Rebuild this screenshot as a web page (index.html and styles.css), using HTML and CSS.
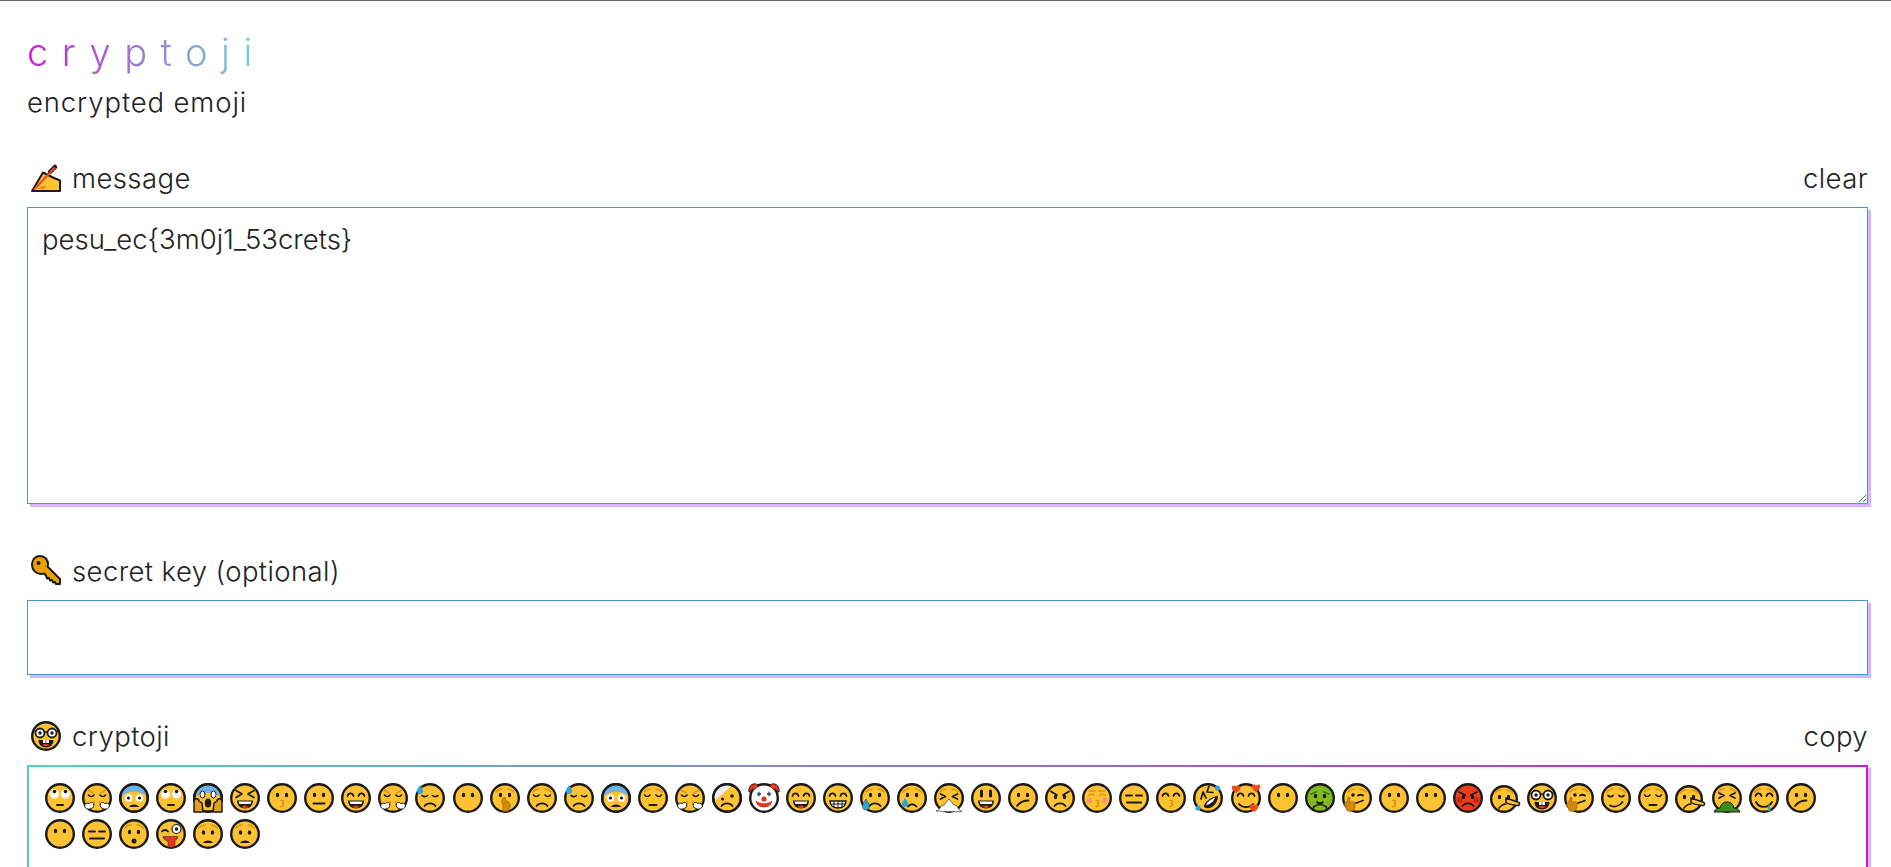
FILE: index.html
```html
<!DOCTYPE html>
<html lang="en">
<head>
  <meta charset="UTF-8">
  <meta name="viewport" content="width=device-width, initial-scale=1">
  <title>cryptoji</title>
  <link rel="stylesheet" href="styles.css">
</head>
<body>

  <!-- emoji drawings, reused below -->
  <svg class="defs" aria-hidden="true">
    <defs>
      <circle id="f" cx="16" cy="16" r="13.8" fill="#ffc233" stroke="#1a1a1a" stroke-width="2.4"/>
      <g id="dots" fill="#1a1a1a"><ellipse cx="11.5" cy="13" rx="1.7" ry="2.3"/><ellipse cx="20.5" cy="13" rx="1.7" ry="2.3"/></g>
      <g id="closed" fill="none" stroke="#1a1a1a" stroke-width="1.6" stroke-linecap="round"><path d="M7.5 13c1.5 2 4 2 5.5 0M19 13c1.5 2 4 2 5.5 0"/></g>
      <g id="arcs" fill="none" stroke="#1a1a1a" stroke-width="1.8" stroke-linecap="round"><path d="M7.5 14c1-3.500 5-3.500 6 0M18.500 14c1-3.500 5-3.500 6 0"/></g>
      <g id="brows" fill="none" stroke="#dd9510" stroke-width="1.5" stroke-linecap="round"><path d="M7 10c1.500-2.500 4-3 6-3M25 10c-1.500-2.500-4-3-6-3"/></g>
      <g id="kiss" fill="none" stroke="#dd9510" stroke-width="1.6" stroke-linecap="round"><path d="M15 18.500c2.500-.5 3.500 2.500 1 3 2.500 .5 2 3.500-1 3"/></g>
      <path id="openmouth" d="M8 18.500h16c0 5-3.500 8-8 8s-8-3-8-8z" fill="#1a1a1a"/>
      <g id="grin"><use href="#openmouth"/><path d="M9.500 19.500h13l-1 2.500h-11z" fill="#fff"/><path d="M12.500 25c1.500-2 5.500-2 7 0-2 1.500-5 1.500-7 0z" fill="#e8361c"/></g>
      <path id="frown" d="M10.500 24c2.500-3.500 8.500-3.500 11 0" fill="none" stroke="#1a1a1a" stroke-width="1.8" stroke-linecap="round"/>
      <g id="steam" fill="#fff" stroke="#1a1a1a" stroke-width="1"><path d="M3.500 24c0-2.500 3-3.500 5-2.500 1-1.500 3-1.500 4 0 1 2-.5 5-2.500 5-1.500 1-5.500 1-6.500-2.500zM28.500 24c0-2.500-3-3.500-5-2.500-1-1.500-3-1.500-4 0-1 2 .5 5 2.500 5 1.500 1 5.500 1 6.500-2.500z"/></g>

      <g id="roll"><use href="#f"/><circle cx="10.500" cy="12" r="4.500" fill="#fff"/><circle cx="21.500" cy="12" r="4.500" fill="#fff"/><circle cx="10.500" cy="9.500" r="1.800" fill="#1a1a1a"/><circle cx="21.500" cy="9.500" r="1.800" fill="#1a1a1a"/><path d="M13 23h6" stroke="#1a1a1a" stroke-width="2" stroke-linecap="round"/></g>
      <g id="triumph"><use href="#f"/><use href="#closed"/><path d="M7 8l5 3M25 8l-5 3" stroke="#dd9510" stroke-width="1.600" stroke-linecap="round"/><path d="M13 19v4M19 19v4" stroke="#dd9510" stroke-width="1.500"/><use href="#steam"/></g>
      <g id="fear"><use href="#f"/><path d="M3.500 14C5 6 10 3 16 3s11 3 12.500 11c-4-3-8-4.500-12.500-4.500S7.500 11 3.500 14z" fill="#6cb4e8"/><circle cx="16" cy="16" r="13.800" fill="none" stroke="#1a1a1a" stroke-width="2.400"/><circle cx="10.500" cy="16" r="3.800" fill="#fff"/><circle cx="21.500" cy="16" r="3.800" fill="#fff"/><circle cx="10.500" cy="16" r="1.600" fill="#1a1a1a"/><circle cx="21.500" cy="16" r="1.600" fill="#1a1a1a"/><path d="M11 25c1-3.500 9-3.500 10 0z" fill="#1a1a1a"/></g>
      <g id="scream"><use href="#f"/><path d="M3.500 14C5 6 10 3 16 3s11 3 12.500 11c-4-2-8-3-12.500-3S7.500 12 3.500 14z" fill="#6cb4e8"/><circle cx="16" cy="16" r="13.800" fill="none" stroke="#1a1a1a" stroke-width="2.400"/><ellipse cx="16" cy="21" rx="3.200" ry="4.500" fill="#1a1a1a"/><path d="M2 30V19c0-3 5-3 5 0l3 2 1 9zM30 30V19c0-3-5-3-5 0l-3 2-1 9z" fill="#e39e1a" stroke="#1a1a1a" stroke-width="1.500" stroke-linejoin="round"/><ellipse cx="10.500" cy="12.500" rx="2.500" ry="3.500" fill="#fff" stroke="#1a1a1a"/><ellipse cx="21.500" cy="12.500" rx="2.500" ry="3.500" fill="#fff" stroke="#1a1a1a"/></g>
      <g id="laugh"><use href="#f"/><path d="M7 8.500l6 3.500-6 3.500M25 8.500l-6 3.500 6 3.500" fill="none" stroke="#1a1a1a" stroke-width="1.800" stroke-linecap="round" stroke-linejoin="round"/><use href="#grin"/></g>
      <g id="kissing"><use href="#f"/><use href="#dots"/><use href="#kiss"/></g>
      <g id="neutral"><use href="#f"/><use href="#dots"/><path d="M10.500 21.500h11" stroke="#1a1a1a" stroke-width="2" stroke-linecap="round"/></g>
      <g id="happy"><use href="#f"/><use href="#arcs"/><use href="#grin"/></g>
      <g id="sweat"><use href="#f"/><path d="M8 13.500c2 1.500 4 1.500 5.500 0M18.500 13.500c1.500 1.500 3.500 1.500 5.500 0" fill="none" stroke="#1a1a1a" stroke-width="1.600" stroke-linecap="round"/><use href="#frown"/><path d="M6 3c1.500 2.500 3 4 3 6a3 3 0 0 1-6 0c0-2 1.500-3.500 3-6z" fill="#2ea3dc"/></g>
      <g id="blank"><use href="#f"/><use href="#dots"/></g>
      <g id="shush"><use href="#f"/><use href="#brows"/><use href="#dots"/><path d="M14 29v-7c-2-1-1-6 1-7 1 0 1.500 1 1.500 3l4 3c1.500 2 .5 5-1.500 8z" fill="#d08a10" stroke="#b06f08"/></g>
      <g id="sad-closed"><use href="#f"/><use href="#brows"/><use href="#closed"/><use href="#frown"/></g>
      <g id="pensive"><use href="#f"/><use href="#brows"/><use href="#closed"/><path d="M12.500 23h7" stroke="#1a1a1a" stroke-width="2" stroke-linecap="round"/></g>
      <g id="bandage"><use href="#f"/><path d="M3 15C4 8 10 3 17 2.500l4 1L5 18z" fill="#eee"/><circle cx="16" cy="16" r="13.800" fill="none" stroke="#1a1a1a" stroke-width="2.400"/><circle cx="21" cy="14" r="1.800" fill="#1a1a1a"/><circle cx="11.500" cy="17" r="1.500" fill="#1a1a1a"/><use href="#frown"/></g>
      <g id="clown"><path d="M1 10C0 3 6 0 10 3h12c4-3 10 0 9 7z" fill="#e8361c" stroke="#1a1a1a"/><circle cx="16" cy="16" r="13.800" fill="#fff" stroke="#1a1a1a" stroke-width="2.400"/><path d="M5 7l4-4M27 7l-4-4" stroke="#e8361c" stroke-width="3"/><circle cx="11" cy="12" r="1.800" fill="#1a1a1a"/><circle cx="21" cy="12" r="1.800" fill="#1a1a1a"/><path d="M11 9v6M21 9v6" stroke="#5bb5e0" stroke-width=".8"/><circle cx="16" cy="17" r="2.600" fill="#e8361c"/><path d="M8 19c1 8 15 8 16 0-4 3.500-12 3.500-16 0z" fill="#e8361c" stroke="#b3200f" stroke-width=".6"/></g>
      <g id="teeth"><use href="#f"/><use href="#arcs"/><path d="M8 19h16c0 4-3 7-8 7s-8-3-8-7z" fill="#fff" stroke="#1a1a1a" stroke-width="1.500"/><path d="M8.500 22h15M12 19v6.500M16 19v7M20 19v6.500" stroke="#1a1a1a"/></g>
      <g id="sad-drop"><use href="#f"/><use href="#brows"/><use href="#dots"/><use href="#frown"/><path d="M7 17c1.500 2.500 3.500 4.500 3.500 7.500a3.500 3.500 0 0 1-7 0c0-3 2-5 3.500-7.500z" fill="#2ea3dc" stroke="#1a1a1a" stroke-width=".4"/></g>
      <g id="cry"><use href="#f"/><use href="#brows"/><use href="#dots"/><path d="M12 24.500c2-3 6-3 8.500 0" fill="none" stroke="#1a1a1a" stroke-width="1.800" stroke-linecap="round"/><path d="M9 16c1 2 3 3.500 3 6a3 3 0 0 1-6 0c0-2.500 2-4 3-6z" fill="#2ea3dc"/></g>
      <g id="huff"><use href="#f"/><use href="#brows"/><path d="M7.500 12l5 2.500-5 2.500M24.500 12l-5 2.500 5 2.500" fill="none" stroke="#1a1a1a" stroke-width="1.700" stroke-linecap="round" stroke-linejoin="round"/><path d="M3 29c2 0 4-2 5-5l3-1 5-6 5 6 3 1c1 3 3 5 5 5l-2 1-2-.8-2 .8-2-.8-2 .8-2-.8-2 .8-2-.8-2 .8-2-.8z" fill="#fff" stroke="#1a1a1a" stroke-width=".6"/></g>
      <g id="smile-open"><use href="#f"/><path d="M11.500 9v5M20.500 9v5" stroke="#1a1a1a" stroke-width="3" stroke-linecap="round"/><use href="#grin"/></g>
      <g id="confused"><use href="#f"/><use href="#dots"/><path d="M10 24c2.500-3.500 7-5.500 11.500-5.500" fill="none" stroke="#1a1a1a" stroke-width="1.800" stroke-linecap="round"/></g>
      <g id="angry"><use href="#f"/><path d="M7 9.500l6 3.500M25 9.500l-6 3.500" stroke="#1a1a1a" stroke-width="1.800" stroke-linecap="round"/><use href="#dots" transform="translate(0 2)"/><use href="#frown"/></g>
      <g id="kiss-blush"><use href="#f"/><path d="M8 9h6M18 9h6" stroke="#dd9510" stroke-width="1.500" stroke-linecap="round"/><path d="M8 13.500c1.500-2 4-2 5.500 0M18.500 13.500c1.500-2 4-2 5.500 0" fill="none" stroke="#dd9510" stroke-width="1.500" stroke-linecap="round"/><circle cx="8.500" cy="18.500" r="3" fill="#f79a6a"/><circle cx="23.500" cy="18.500" r="3" fill="#f79a6a"/><use href="#kiss"/></g>
      <g id="flat"><use href="#f"/><path d="M8 13.500h6M18 13.500h6" stroke="#1a1a1a" stroke-width="1.900" stroke-linecap="round"/><path d="M9 20.500h14" stroke="#1a1a1a" stroke-width="2" stroke-linecap="round"/></g>
      <g id="kiss-smile"><use href="#f"/><use href="#arcs"/><use href="#kiss"/></g>
      <g id="rofl"><use href="#f"/><path d="M9 17l2-7 3 6M17 4l-2 6 6 .5" fill="none" stroke="#1a1a1a" stroke-width="1.700" stroke-linecap="round" stroke-linejoin="round"/><path d="M12 25c-.5-4 6-10 14-11 0 8-8 15-14 11z" fill="#1a1a1a"/><path d="M14 23c1-3 5-6 9-7.500-1 4-5 7-9 7.500z" fill="#fff"/><circle cx="6" cy="26" r="2.600" fill="#2ea3dc"/><circle cx="25.500" cy="6" r="2.600" fill="#2ea3dc"/></g>
      <g id="hearts"><use href="#f"/><use href="#arcs"/><path d="M9 22c3 4 11 4 14 0" fill="none" stroke="#1a1a1a" stroke-width="1.800" stroke-linecap="round"/><g fill="#f0481f"><path d="M6 11C2 8 1 6 2.500 4 4 3 6 3.500 6 5c.5-1.500 3-2 4-.5 1 2.500-1 4.500-4 6.500z"/><path d="M26 10c-4-3-5-5-3.500-7 1.500-1 3.500-.5 3.500 1 .5-1.500 3-2 4-.5 1 2.500-1 4.500-4 6.500z"/><path d="M24 30c-4-3-5-5-3.500-7 1.500-1 3.500-.5 3.500 1 .5-1.500 3-2 4-.5 1 2.500-1 4.500-4 6.500z"/></g></g>
      <g id="nausea"><circle cx="16" cy="16" r="13.800" fill="#82b820" stroke="#1a1a1a" stroke-width="2.400"/><path d="M7 12l5-2M25 12l-5-2" stroke="#2b7f20" stroke-width="1.600" stroke-linecap="round"/><use href="#dots" transform="translate(0 1)"/><path d="M9.500 26c0-2 1-2 2-2 2-2 7-2 9 0 1 0 2 0 2 2M13 20c1 1.500 5 1.500 6 0" fill="none" stroke="#1a1a1a" stroke-width="1.700" stroke-linecap="round"/></g>
      <g id="think"><use href="#f"/><use href="#brows"/><circle cx="12" cy="13" r="1.800" fill="#1a1a1a"/><path d="M17 13.500c1.500-1 3.500-1 5 0" stroke="#1a1a1a" stroke-width="2" fill="none" stroke-linecap="round"/><path d="M14 21.500l8-3" stroke="#1a1a1a" stroke-width="1.800" stroke-linecap="round"/><path d="M3.500 22l2-1 2-6 1.500 1-.5 4h4.500c1.500 0 1.500 2 .5 2.500 1 1 .5 5.500-2.500 6.500H6.500z" fill="#d08a10" stroke="#b06f08"/></g>
      <g id="rage"><circle cx="16" cy="16" r="13.800" fill="#f03c1a" stroke="#1a1a1a" stroke-width="2.400"/><circle cx="7.500" cy="18" r="3" fill="#c42a18"/><circle cx="24.500" cy="18" r="3" fill="#c42a18"/><path d="M7 10l6 3M25 10l-6 3" stroke="#1a1a1a" stroke-width="1.800" stroke-linecap="round"/><use href="#dots" transform="translate(0 2)"/><use href="#frown"/></g>
      <g id="lying"><circle cx="15" cy="17" r="12.800" fill="#ffc233" stroke="#1a1a1a" stroke-width="2.400"/><use href="#brows" transform="translate(-1 1)"/><use href="#dots" transform="translate(-1 2)"/><path d="M17 16l13 4.500c1.500 1.500 0 3.500-2 3-3-.5-8-1-11-3z" fill="#ffc233" stroke="#1a1a1a" stroke-width="1.500" stroke-linejoin="round"/><path d="M10 26c2.500-3 5-4 7-4" fill="none" stroke="#1a1a1a" stroke-width="1.700" stroke-linecap="round"/></g>
      <g id="nerd"><use href="#f"/><circle cx="10" cy="13" r="4.500" fill="#fff" stroke="#1a1a1a" stroke-width="1.800"/><circle cx="22" cy="13" r="4.500" fill="#fff" stroke="#1a1a1a" stroke-width="1.800"/><circle cx="10" cy="13" r="1.700" fill="#1a1a1a"/><circle cx="22" cy="13" r="1.700" fill="#1a1a1a"/><path d="M2.500 11h3M14.500 12h3M26.500 11h3" stroke="#1a1a1a" stroke-width="1.600"/><path d="M8.500 20h15c0 4.500-3 7.500-7.500 7.500S8.500 24.500 8.500 20z" fill="#1a1a1a"/><path d="M13 20h6v3h-6z" fill="#fff"/><path d="M16 20v3" stroke="#1a1a1a" stroke-width=".7"/><path d="M12 25c2-1.500 6-1.500 8 0-2 1.500-6 1.500-8 0z" fill="#e8361c"/></g>
      <g id="smirk"><use href="#f"/><use href="#brows"/><path d="M8 13.500c1 1.500 4 1.500 5 0M19 13.500c1 1.500 4 1.500 5 0" fill="none" stroke="#1a1a1a" stroke-width="1.700" stroke-linecap="round"/><path d="M10 23.500c4 2 9 1 12.500-3.500" fill="none" stroke="#1a1a1a" stroke-width="1.800" stroke-linecap="round"/></g>
      <g id="vomit"><use href="#f"/><use href="#brows"/><path d="M8 11l5 2.500-5 2.500M24 11l-5 2.500 5 2.500" fill="none" stroke="#1a1a1a" stroke-width="1.700" stroke-linecap="round" stroke-linejoin="round"/><path d="M3 30c1-3 4-4 6-4 1-4 3-6 7-6s6 2 7 6c2 0 5 1 6 4z" fill="#3b8a1e" stroke="#1a1a1a" stroke-width="1"/></g>
      <g id="drool"><use href="#f"/><use href="#brows"/><use href="#arcs"/><path d="M8 20c3 6 12 7 16 0" fill="none" stroke="#1a1a1a" stroke-width="1.800" stroke-linecap="round"/><path d="M21 22c1 2 1.500 3.500 1.500 7h-2.500c0-3 0-5 1-7z" fill="#2ea3dc"/></g>
      <g id="hushed"><use href="#f"/><use href="#brows"/><use href="#dots" transform="translate(0 1)"/><circle cx="16" cy="23" r="2.500" fill="#1a1a1a"/></g>
      <g id="wink"><use href="#f"/><path d="M7 13.500c1.500-2 4.500-2 6 0" fill="none" stroke="#1a1a1a" stroke-width="1.800" stroke-linecap="round"/><circle cx="21.500" cy="11" r="4.500" fill="#fff" stroke="#1a1a1a" stroke-width="1.200"/><circle cx="21.500" cy="11" r="1.800" fill="#1a1a1a"/><path d="M8 18.500h15c0 2-1.500 3-3 4v4c0 4-7 4-7 0v-3c-2-1-5-2.500-5-5z" fill="#e8361c" stroke="#1a1a1a" stroke-width=".5"/></g>
      <g id="frowning"><use href="#f"/><use href="#brows"/><use href="#dots" transform="translate(0 1.500)"/><path d="M11 25c1-3.500 9-3.500 10 0z" fill="#1a1a1a"/></g>

      <g id="hand">
        <path d="M2 29l11-18.500 10 5 7 3V29z" fill="#ffc233" stroke="#1a1a1a" stroke-width="2" stroke-linejoin="round"/>
        <path d="M8 27c2-3 6-4 9-3l-3 3z" fill="#dd9510"/>
        <path d="M20 10l5-5" stroke="#1a1a1a" stroke-width="4.500" stroke-linecap="round"/>
        <path d="M4 27.500L25 5.500" stroke="#f0481f" stroke-width="2.200"/>
      </g>
      <g id="key" transform="translate(-1 -1)">
        <path d="M3 10c0-5 4-8 8-8 5 0 8 4 8 8 0 1-.2 2-.5 2.500L31 25v5h-4l-1-2-2 .5-1-2.500-2 .5-1-2.500-2 .5-1-3-2-2c-1 .3-1.500 .5-3 .5-5 0-9-4-9-9z" fill="#eca000" stroke="#1a1a1a" stroke-width="2" stroke-linejoin="round"/>
        <circle cx="9.500" cy="9" r="2" fill="#1a1a1a"/>
      </g>
    </defs>
  </svg>

  <h1 class="logo">cryptoji</h1>
  <p class="tagline">encrypted emoji</p>

  <div class="field-head">
    <label class="field-label" for="message"><svg class="icon" viewBox="1 1 30 30"><use href="#hand"/></svg>message</label>
    <a class="action" href="#">clear</a>
  </div>
  <textarea class="box message" id="message">pesu_ec{3m0j1_53crets}</textarea>

  <div class="field-head">
    <label class="field-label" for="key"><svg class="icon" viewBox="1 1 30 30"><use href="#key"/></svg>secret key (optional)</label>
  </div>
  <input class="box key" id="key" type="text">

  <div class="field-head">
    <label class="field-label"><svg class="icon" viewBox="1 1 30 30"><use href="#nerd"/></svg>cryptoji</label>
    <a class="action" href="#">copy</a>
  </div>
  <div class="output">
    <svg class="emoji" viewBox="1 1 30 30"><use href="#roll"/></svg>
    <svg class="emoji" viewBox="1 1 30 30"><use href="#triumph"/></svg>
    <svg class="emoji" viewBox="1 1 30 30"><use href="#fear"/></svg>
    <svg class="emoji" viewBox="1 1 30 30"><use href="#roll"/></svg>
    <svg class="emoji" viewBox="1 1 30 30"><use href="#scream"/></svg>
    <svg class="emoji" viewBox="1 1 30 30"><use href="#laugh"/></svg>
    <svg class="emoji" viewBox="1 1 30 30"><use href="#kissing"/></svg>
    <svg class="emoji" viewBox="1 1 30 30"><use href="#neutral"/></svg>
    <svg class="emoji" viewBox="1 1 30 30"><use href="#happy"/></svg>
    <svg class="emoji" viewBox="1 1 30 30"><use href="#triumph"/></svg>
    <svg class="emoji" viewBox="1 1 30 30"><use href="#sweat"/></svg>
    <svg class="emoji" viewBox="1 1 30 30"><use href="#blank"/></svg>
    <svg class="emoji" viewBox="1 1 30 30"><use href="#shush"/></svg>
    <svg class="emoji" viewBox="1 1 30 30"><use href="#sad-closed"/></svg>
    <svg class="emoji" viewBox="1 1 30 30"><use href="#sweat"/></svg>
    <svg class="emoji" viewBox="1 1 30 30"><use href="#fear"/></svg>
    <svg class="emoji" viewBox="1 1 30 30"><use href="#pensive"/></svg>
    <svg class="emoji" viewBox="1 1 30 30"><use href="#triumph"/></svg>
    <svg class="emoji" viewBox="1 1 30 30"><use href="#bandage"/></svg>
    <svg class="emoji" viewBox="1 1 30 30"><use href="#clown"/></svg>
    <svg class="emoji" viewBox="1 1 30 30"><use href="#happy"/></svg>
    <svg class="emoji" viewBox="1 1 30 30"><use href="#teeth"/></svg>
    <svg class="emoji" viewBox="1 1 30 30"><use href="#sad-drop"/></svg>
    <svg class="emoji" viewBox="1 1 30 30"><use href="#cry"/></svg>
    <svg class="emoji" viewBox="1 1 30 30"><use href="#huff"/></svg>
    <svg class="emoji" viewBox="1 1 30 30"><use href="#smile-open"/></svg>
    <svg class="emoji" viewBox="1 1 30 30"><use href="#confused"/></svg>
    <svg class="emoji" viewBox="1 1 30 30"><use href="#angry"/></svg>
    <svg class="emoji" viewBox="1 1 30 30"><use href="#kiss-blush"/></svg>
    <svg class="emoji" viewBox="1 1 30 30"><use href="#flat"/></svg>
    <svg class="emoji" viewBox="1 1 30 30"><use href="#kiss-smile"/></svg>
    <svg class="emoji" viewBox="1 1 30 30"><use href="#rofl"/></svg>
    <svg class="emoji" viewBox="1 1 30 30"><use href="#hearts"/></svg>
    <svg class="emoji" viewBox="1 1 30 30"><use href="#blank"/></svg>
    <svg class="emoji" viewBox="1 1 30 30"><use href="#nausea"/></svg>
    <svg class="emoji" viewBox="1 1 30 30"><use href="#think"/></svg>
    <svg class="emoji" viewBox="1 1 30 30"><use href="#kissing"/></svg>
    <svg class="emoji" viewBox="1 1 30 30"><use href="#blank"/></svg>
    <svg class="emoji" viewBox="1 1 30 30"><use href="#rage"/></svg>
    <svg class="emoji" viewBox="1 1 30 30"><use href="#lying"/></svg>
    <svg class="emoji" viewBox="1 1 30 30"><use href="#nerd"/></svg>
    <svg class="emoji" viewBox="1 1 30 30"><use href="#think"/></svg>
    <svg class="emoji" viewBox="1 1 30 30"><use href="#smirk"/></svg>
    <svg class="emoji" viewBox="1 1 30 30"><use href="#pensive"/></svg>
    <svg class="emoji" viewBox="1 1 30 30"><use href="#lying"/></svg>
    <svg class="emoji" viewBox="1 1 30 30"><use href="#vomit"/></svg>
    <svg class="emoji" viewBox="1 1 30 30"><use href="#drool"/></svg>
    <svg class="emoji" viewBox="1 1 30 30"><use href="#confused"/></svg>
    <svg class="emoji" viewBox="1 1 30 30"><use href="#blank"/></svg>
    <svg class="emoji" viewBox="1 1 30 30"><use href="#flat"/></svg>
    <svg class="emoji" viewBox="1 1 30 30"><use href="#hushed"/></svg>
    <svg class="emoji" viewBox="1 1 30 30"><use href="#wink"/></svg>
    <svg class="emoji" viewBox="1 1 30 30"><use href="#frowning"/></svg>
    <svg class="emoji" viewBox="1 1 30 30"><use href="#frowning"/></svg>
  </div>

</body>
</html>
```

FILE: styles.css
```css
html {
  height: 100%;
  overflow: hidden;
}

body {
  height: 866px;
  margin: 0;
  padding: 0 23px 0 27px;
  border-top: 1px solid #666;
  overflow: hidden;
  font-family: 'Inter', sans-serif;
  font-weight: 300;
  font-size: 27.5px;
  letter-spacing: 0.4px;
  color: #222;
  background: white;
}

.defs {
  position: absolute;
  width: 0;
  height: 0;
}

.logo {
  margin: 28px 0 0;
  width: max-content;
  font-size: 38px;
  font-weight: 300;
  line-height: 46px;
  letter-spacing: 13.5px;
  background: linear-gradient(90deg, #c81fd0, #66e0d0);
  -webkit-background-clip: text;
  background-clip: text;
  color: transparent;
}

.tagline {
  margin: 9px 0 38px;
  line-height: 36px;
  letter-spacing: 0.87px;
}

.field-head {
  display: flex;
  justify-content: space-between;
  align-items: center;
  height: 40px;
  margin-bottom: 9px;
}

.field-label {
  display: flex;
  align-items: center;
}

.icon {
  width: 30px;
  height: 30px;
  margin: 0 11px 0 4px;
  overflow: visible;
}

.action {
  color: inherit;
  text-decoration: none;
}

.box {
  display: block;
  width: 100%;
  box-sizing: border-box;
  padding: 14px;
  border: 1px solid #4a9cc4;
  border-radius: 0;
  outline: none;
  box-shadow: 3px 3px 0 #d9b3ff;
  font: inherit;
  letter-spacing: 0;
  color: inherit;
}

.message {
  height: 297px;
  margin: 0 0 47px;
}

.key {
  height: 75px;
  margin: 0 0 41px;
}

.output {
  display: flex;
  flex-wrap: wrap;
  align-content: flex-start;
  gap: 6.3px 7.05px;
  box-sizing: border-box;
  height: 297px;
  padding: 16px;
  border: 2px solid;
  border-image: linear-gradient(90deg, #4fd4bc, #c81fd0) 1;
  box-shadow: 3px 3px 0 #d9b3ff;
}

.emoji {
  width: 30px;
  height: 30px;
  overflow: visible;
}
```
